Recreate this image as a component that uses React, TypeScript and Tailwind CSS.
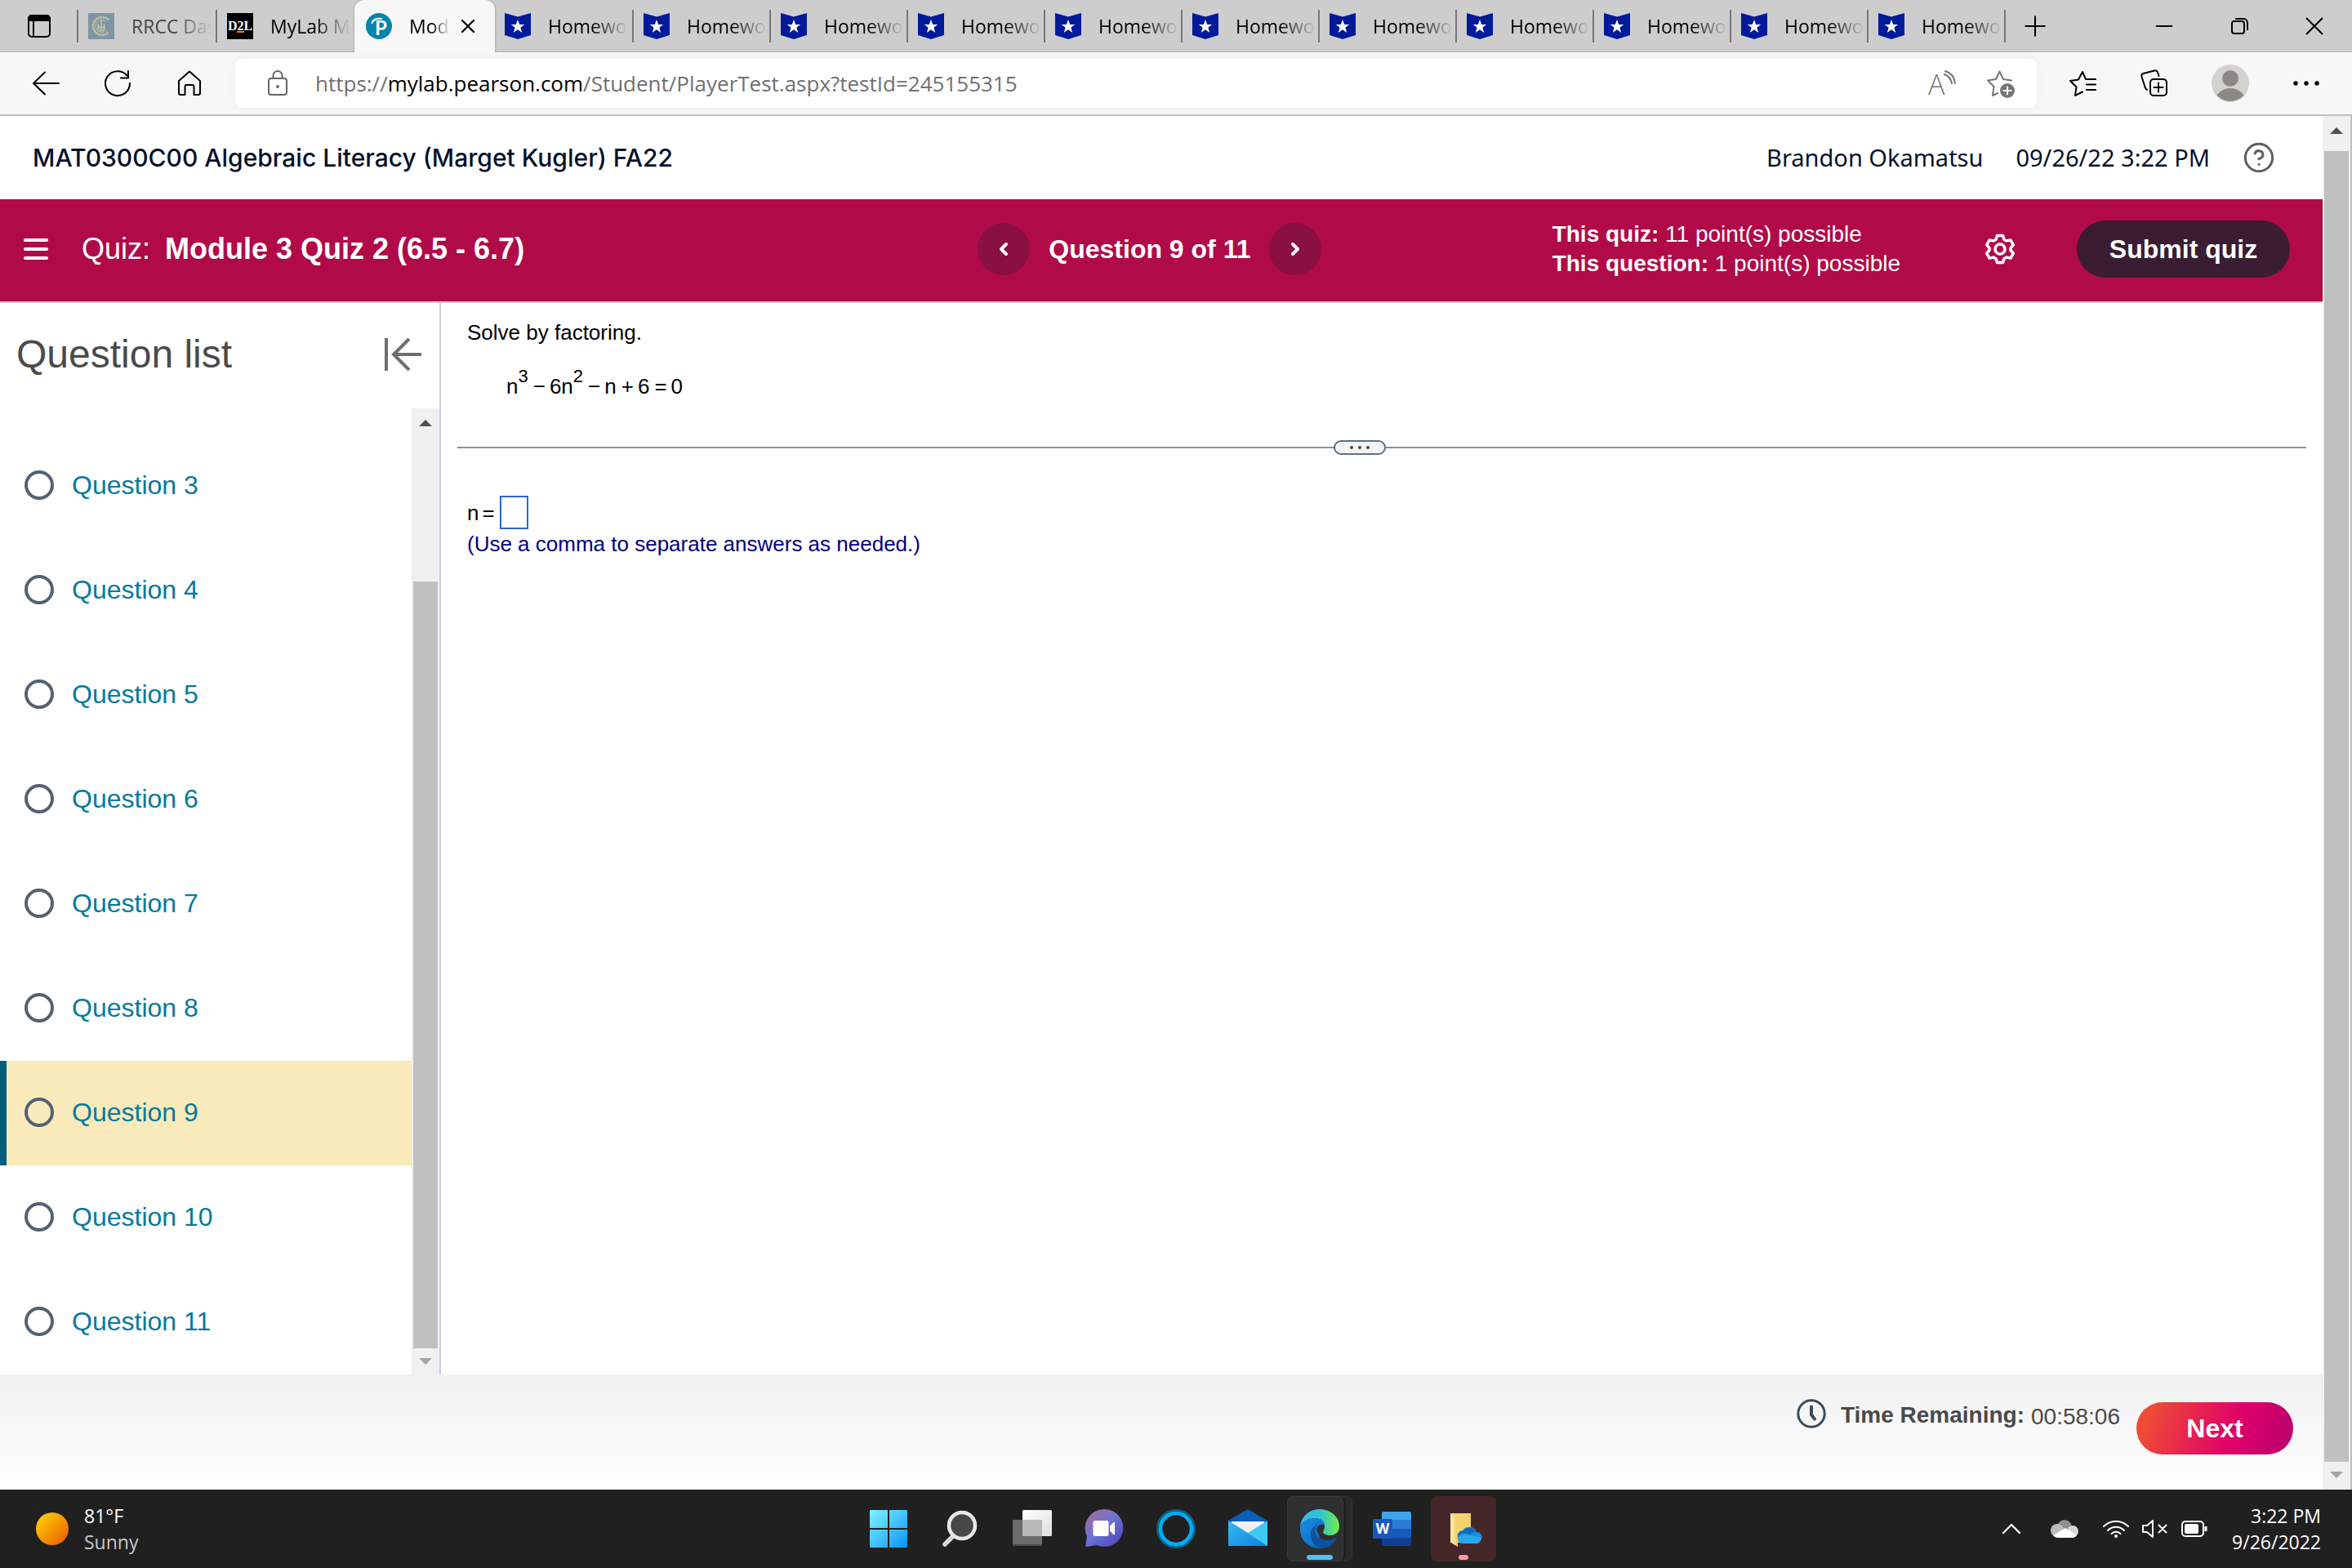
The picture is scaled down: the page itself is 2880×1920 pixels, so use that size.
import type { ReactNode } from 'react'
import { ChevronLeft, ChevronRight, ChevronUp, CircleHelp, Minus, Plus, X } from 'lucide-react'
import { clsx } from 'clsx'

type TabIcon = 'rrcc' | 'd2l' | 'pearson' | 'badge'

interface Tab {
  icon: TabIcon
  title: string
  faded?: boolean
}

const leadingTabs: Tab[] = [
  { icon: 'rrcc', title: 'RRCC Dashboard', faded: true },
  { icon: 'd2l', title: 'MyLab Math' },
]

const homeworkTabs: Tab[] = Array.from({ length: 11 }, () => ({ icon: 'badge', title: 'Homework' }))

const questions = [3, 4, 5, 6, 7, 8, 9, 10, 11]
const currentQuestion = 9

const fade = '[mask-image:linear-gradient(to_right,black_55%,transparent)]'

/* ---------- favicons ---------- */

function Favicon({ icon }: { icon: TabIcon }) {
  if (icon === 'rrcc') {
    return (
      <svg viewBox="0 0 32 32" className="size-8 shrink-0">
        <rect width="32" height="32" fill="#7b95a6" />
        <path d="M25 8.5A11 11 0 1 0 25 23.500" fill="none" stroke="#bfbf9d" strokeWidth="3" strokeDasharray="2.400 0.500" />
        <path d="M22 11A7.500 7.500 0 1 0 22 21" fill="none" stroke="#c6c6a4" strokeWidth="1" />
        <path d="M16 8v14M12.500 13v8M19.500 13v8M11 17.500h10M13 21.500h6" fill="none" stroke="#c6c6a4" strokeWidth="1.500" />
      </svg>
    )
  }
  if (icon === 'd2l') {
    return (
      <span className="relative flex size-8 shrink-0 items-center justify-center overflow-hidden bg-black font-['Liberation_Serif',serif] text-[16px] leading-none font-bold text-white">
        D2L
        <span className="absolute top-[22px] left-3 h-[2px] w-[9px] bg-[#f0792b]" />
      </span>
    )
  }
  if (icon === 'pearson') {
    return (
      <svg viewBox="0 0 32 32" className="size-8 shrink-0">
        <circle cx="16" cy="16" r="16" fill="#0484ab" />
        <path d="M7.500 12C9 8 14 6 19 7" fill="none" stroke="white" strokeWidth="2.200" strokeLinecap="round" />
        <text x="11" y="27" fill="white" fontSize="24" fontWeight="700" fontFamily="Lato, sans-serif">P</text>
      </svg>
    )
  }
  return (
    <svg viewBox="0 0 32 32" className="size-8 shrink-0">
      <path d="M0 0l16 4.500L32 0v27L16 32 0 27z" fill="#001a9a" />
      <path d="M16 8l2.200 6h6l-4.800 3.700 1.800 6.300-5.200-3.700-5.200 3.700 1.800-6.300L7.800 14h6z" fill="white" />
    </svg>
  )
}

function BrowserTab({ tab, className = 'w-[168px]' }: { tab: Tab; className?: string }) {
  return (
    <button className={clsx('flex h-10 items-center gap-[21px] overflow-hidden border-[#777] pl-3 text-left', className)}>
      <Favicon icon={tab.icon} />
      <span className={clsx('w-[98px] overflow-hidden whitespace-nowrap', fade, tab.faded ? 'text-[#444]' : 'text-black')}>
        {tab.title}
      </span>
    </button>
  )
}

function TabStrip() {
  return (
    <div className="flex h-16 items-center border-b border-[#b8b8b8] bg-[#cdcdcd] text-[23px] leading-8">
      <button aria-label="Tab actions" className="flex h-10 w-24 items-center border-r-2 border-[#777] pl-[34px]">
        <svg viewBox="0 0 28 28" className="size-7" fill="none" stroke="black" strokeWidth="2">
          <rect x="1" y="1" width="26" height="26" rx="4" />
          <path d="M1 7V5a4 4 0 0 1 4-4h18a4 4 0 0 1 4 4v2z" fill="black" />
          <path d="M7 8v19" />
        </svg>
      </button>
      <BrowserTab tab={leadingTabs[0]} className="w-[170px] border-r-2" />
      <BrowserTab tab={leadingTabs[1]} className="w-[168px]" />
      <div className="flex h-16 w-[172px] items-center rounded-t-xl bg-[#f7f7f7] pl-[14px] shadow-[0_0_3px_rgba(0,0,0,0.3)]">
        <Favicon icon="pearson" />
        <span className={clsx('ml-[21px] w-[50px] overflow-hidden whitespace-nowrap', fade)}>Module 3</span>
        <button aria-label="Close tab" className="ml-2">
          <X className="size-7" strokeWidth={2} />
        </button>
      </div>
      {homeworkTabs.map((tab, i) => (
        <BrowserTab key={i} tab={tab} className={i === 0 ? 'w-[170px] border-r-2' : 'w-[168px] border-r-2'} />
      ))}
      <button aria-label="New tab" className="ml-4">
        <Plus className="size-10" strokeWidth={1.2} />
      </button>
      <div className="ml-auto flex items-center gap-[60px] pr-[30px]">
        <button aria-label="Minimize">
          <Minus className="size-8" strokeWidth={1.5} />
        </button>
        <button aria-label="Restore">
          <svg viewBox="0 0 32 32" className="size-8" fill="none" stroke="black" strokeWidth="2">
            <rect x="7" y="10" width="15" height="15" rx="3" />
            <path d="M11 7h10a5 5 0 0 1 5 5v9" />
          </svg>
        </button>
        <button aria-label="Close">
          <svg viewBox="0 0 32 32" className="size-8" fill="none" stroke="black" strokeWidth="2">
            <path d="M6 6l20 20M26 6L6 26" />
          </svg>
        </button>
      </div>
    </div>
  )
}

function LineIcon({ label, color = 'black', children }: { label: string; color?: string; children: ReactNode }) {
  return (
    <button aria-label={label} className="shrink-0">
      <svg viewBox="0 0 36 36" className="size-9" fill="none" stroke={color} strokeWidth="2" strokeLinecap="round" strokeLinejoin="round">
        {children}
      </svg>
    </button>
  )
}

function Toolbar() {
  return (
    <div className="flex h-[78px] items-center border-b-2 border-[#bfbfbf] bg-[#f7f7f7] pr-[38px] pl-[38px]">
      <div className="flex w-[250px] items-center gap-[52px]">
        <LineIcon label="Back">
          <path d="M17 4.500L3 18l14 13.500M3 18h31" />
        </LineIcon>
        <LineIcon label="Refresh">
          <path d="M33 18A15 15 0 1 1 29.500 8.500M31 3v8.500h-9" />
        </LineIcon>
        <LineIcon label="Home">
          <path d="M5 15L18 3.500 31 15v15a2 2 0 0 1-2 2h-5.500V22a2 2 0 0 0-2-2h-7a2 2 0 0 0-2 2v10H7a2 2 0 0 1-2-2z" />
        </LineIcon>
      </div>
      <div className="flex h-[60px] min-w-0 flex-1 items-center rounded-lg bg-white pr-[26px] pl-[34px] shadow-[0_0_8px_rgba(0,0,0,0.06)]">
        <LineIcon label="Site information" color="#666">
          <rect x="7" y="12" width="22" height="20" rx="3" />
          <path d="M12.500 12V8.500a5.500 5.500 0 0 1 11 0V12" />
          <circle cx="18" cy="22" r="1" fill="#666" />
        </LineIcon>
        <span className="ml-7 flex-1 truncate text-[26px] leading-9 text-[#707070]">
          https://<span className="text-black">mylab.pearson.com</span>/Student/PlayerTest.aspx?testId=245155315
        </span>
        <LineIcon label="Read aloud" color="#767676">
          <text x="1" y="32" fontSize="34" fill="#767676" stroke="none" fontFamily="Open Sans, sans-serif" fontWeight="300">A</text>
          <path d="M21 7c5 2 8 6 9 11M22 3c7 2 11 7 12 15" />
        </LineIcon>
        <span className="w-9" />
        <LineIcon label="Add to favorites" color="#767676">
          <path d="M31 14.500l-10-1.500-4.500-9.500L12 13 2 14.500l7.500 7.500L8 33l6-3" />
          <circle cx="26" cy="27" r="9" fill="#767676" stroke="none" />
          <path d="M26 22.500v9M21.500 27h9" stroke="white" />
        </LineIcon>
      </div>
      <div className="flex items-center gap-[52px] pl-[38px]">
        <LineIcon label="Favorites">
          <path d="M34 13H22L18 4l-5 9.500L3 15l7.500 7.500L9 33l9-4.500M23 19.500h11M23 26h11" />
        </LineIcon>
        <LineIcon label="Collections">
          <path d="M9 26l-2-2L2.500 10a3 3 0 0 1 2-4L18 2.500a3 3 0 0 1 4 2L23.500 9" />
          <rect x="13" y="13" width="20" height="20" rx="4" />
          <path d="M23 17.500v11M17.500 23h11" />
        </LineIcon>
        <button aria-label="Profile">
          <svg viewBox="0 0 46 46" className="size-[46px]">
            <clipPath id="avatar"><circle cx="23" cy="23" r="22" /></clipPath>
            <circle cx="23" cy="23" r="23" fill="#d3d2cf" />
            <g clipPath="url(#avatar)" fill="#8c8985">
              <circle cx="23" cy="17" r="10" />
              <ellipse cx="23" cy="44" rx="18" ry="15" />
            </g>
          </svg>
        </button>
        <LineIcon label="Settings and more">
          <g fill="black" stroke="none">
            <circle cx="5" cy="18" r="2.700" />
            <circle cx="18" cy="18" r="2.700" />
            <circle cx="31" cy="18" r="2.700" />
          </g>
        </LineIcon>
      </div>
    </div>
  )
}

/* ---------- MyLab page ---------- */

function CourseHeader() {
  return (
    <header className="flex h-[102px] items-center pr-[58px] pl-10 text-[#05112a]">
      <h1 className="flex-1 font-['Inter',sans-serif] text-[30px] leading-10 font-medium">
        MAT0300C00 Algebraic Literacy (Marget Kugler) FA22
      </h1>
      <span className="font-['Noto_Sans',sans-serif] text-[29px] leading-10">Brandon Okamatsu</span>
      <span className="ml-10 font-['Noto_Sans',sans-serif] text-[29px] leading-10">09/26/22 3:22 PM</span>
      <button aria-label="Help" className="ml-10 text-[#5b6060]">
        <CircleHelp className="size-10" strokeWidth={1.8} />
      </button>
    </header>
  )
}

function QuizBar() {
  return (
    <div className="flex h-[127px] items-center border-b-2 border-[#c7cbd8] bg-[#b00b48] pr-10 pb-1 text-white">
      <div className="flex w-[42.7%] shrink-0 items-center pl-[29px]">
        <button aria-label="Menu" className="flex w-[30px] flex-col gap-[7px]">
          <span className="h-1 rounded-full bg-white" />
          <span className="h-1 rounded-full bg-white" />
          <span className="h-1 rounded-full bg-white" />
        </button>
        <span className="ml-[41px] text-[36px] leading-10">Quiz:</span>
        <h2 className="ml-[18px] text-[36px] leading-10 font-bold">Module 3 Quiz 2 (6.5 - 6.7)</h2>
      </div>
      <nav className="flex items-center">
        <button aria-label="Previous question" className="flex size-16 items-center justify-center rounded-full bg-[#8a0f42]">
          <ChevronLeft className="size-6" strokeWidth={4} />
        </button>
        <span className="mx-[23px] text-[32px] leading-10 font-bold">Question 9 of 11</span>
        <button aria-label="Next question" className="flex size-16 items-center justify-center rounded-full bg-[#8a0f42]">
          <ChevronRight className="size-6" strokeWidth={4} />
        </button>
      </nav>
      <div className="ml-auto flex items-center">
        <div className="text-[28px] leading-9">
          <p><b>This quiz:</b> 11 point(s) possible</p>
          <p><b>This question:</b> 1 point(s) possible</p>
        </div>
        <button aria-label="Settings" className="ml-[102px]">
          <svg viewBox="0 0 40 40" className="size-10" fill="none" stroke="white" strokeWidth="3.500" strokeLinejoin="round">
            <path d="M16.500 3.500h7l1.500 4.700 3 1.700 4.900-1 3.400 6-3.300 3.700v2.900l3.300 3.600-3.400 6-4.900-1-3 1.700-1.500 4.700h-7L15 31.800l-3-1.700-4.900 1-3.400-6L7 21.500v-2.900l-3.300-3.700 3.400-6 4.900 1 3-1.700z" />
            <circle cx="20" cy="20" r="6" />
          </svg>
        </button>
        <button className="ml-[74px] h-[70px] w-[261px] rounded-full bg-[#3a1d33] text-[32px] leading-10 font-bold">Submit quiz</button>
      </div>
    </div>
  )
}

function Scrollbar({ children, className }: { children: ReactNode; className?: string }) {
  return (
    <div aria-hidden="true" className={clsx('flex w-[34px] shrink-0 flex-col items-center bg-[#f0f0f0]', className)}>
      {children}
    </div>
  )
}

function ArrowUp() {
  return <svg viewBox="0 0 16 8" className="h-2 w-4 shrink-0"><path d="M0 8l8-8 8 8z" fill="#505050" /></svg>
}

function ArrowDown() {
  return <svg viewBox="0 0 16 8" className="h-2 w-4 shrink-0"><path d="M0 0l8 8 8-8z" fill="#a3a3a3" /></svg>
}

function QuestionList() {
  return (
    <aside className="flex w-[540px] shrink-0 flex-col border-r-2 border-[#cdd0df]">
      <div className="flex h-[129px] items-center justify-between pr-[20px] pb-1 pl-5">
        <h2 className="text-[48px] leading-[56px] text-[#4a4a4a]">Question list</h2>
        <button aria-label="Collapse question list">
          <svg viewBox="0 0 48 42" className="h-[42px] w-12" fill="none" stroke="#6a7070" strokeWidth="4">
            <path d="M3 1v40M46 21H12M31 2L12 21l19 19" />
          </svg>
        </button>
      </div>
      <div className="flex flex-1">
        <ul className="flex-1 pt-[31px]">
          {questions.map(n => (
            <li key={n}>
              <a
                href={`#question-${n}`}
                className={clsx(
                  'flex h-32 items-center gap-[22px] border-l-8 pb-[2px] pl-[22px] text-[32px] leading-10 text-[#047a9c]',
                  n === currentQuestion ? 'border-[#005d7c] bg-[#f9eabb]' : 'border-transparent'
                )}
              >
                <span className="size-9 rounded-full border-4 border-[#536270]" />
                Question {n}
              </a>
            </li>
          ))}
        </ul>
        <Scrollbar className="pt-[14px] pb-3">
          <ArrowUp />
          <div className="mt-[190px] mb-3 w-[30px] flex-1 bg-[#c0c0c0]" />
          <ArrowDown />
        </Scrollbar>
      </div>
    </aside>
  )
}

function Operator({ children }: { children: ReactNode }) {
  return <span className="mr-[5px] ml-[6px]">{children}</span>
}

function QuestionPanel() {
  return (
    <main className="min-w-0 flex-1 pt-[18px] pr-5 pl-5 text-[26px] leading-9 text-black">
      <p className="pl-3">Solve by factoring.</p>
      <p className="mt-[30px] pl-[60px]">
        n<sup className="-top-[14px] text-[22px]">3</sup>
        <Operator>−</Operator>6n<sup className="-top-[14px] text-[22px]">2</sup>
        <Operator>−</Operator>n<Operator>+</Operator>6<Operator>=</Operator>0
      </p>
      <div className="relative mt-14 h-[2px] bg-[#8a90a8]">
        <button
          aria-label="Resize panels"
          className="absolute -top-2 left-[47.4%] flex h-[18px] w-16 items-center justify-center gap-[6px] rounded-full border-2 border-[#5f7180] bg-[#f3f4f6]"
        >
          <span className="size-1 rounded-full bg-[#444]" />
          <span className="size-1 rounded-full bg-[#444]" />
          <span className="size-1 rounded-full bg-[#444]" />
        </button>
      </div>
      <div className="mt-[58px] flex h-[41px] items-center gap-[6px] pl-3">
        <label htmlFor="answer" className="flex gap-1">
          <span>n</span>
          <span>=</span>
        </label>
        <input id="answer" className="h-[41px] w-[35px] border-2 border-[#2f66d0] outline-none" />
      </div>
      <p className="pl-3 text-[#00007f]">(Use a comma to separate answers as needed.)</p>
    </main>
  )
}

function QuizFooter() {
  return (
    <footer className="flex h-[141px] items-start justify-end bg-linear-to-b from-[#f1f1f1] to-white pt-[34px] pr-9 text-[28px] leading-9 text-[#4a4a4a]">
      <svg viewBox="0 0 36 36" className="mt-[-4px] size-9" fill="none" stroke="#3a4b5c" strokeLinecap="round" strokeLinejoin="round">
        <circle cx="18" cy="18" r="16.200" strokeWidth="3" />
        <path d="M18 9.500v10l4 5" strokeWidth="4" />
      </svg>
      <b className="mt-[-2px] ml-[18px]">Time Remaining:</b>
      <span className="ml-2">00:58:06</span>
      <button className="ml-5 h-16 w-48 rounded-full bg-[linear-gradient(110deg,#ee4a35_10%,#e0006a_62%,#b5006e)] text-[32px] font-bold text-white">
        Next
      </button>
    </footer>
  )
}

/* ---------- taskbar ---------- */

function AppTile({ label, className, children }: { label: string; className?: string; children: ReactNode }) {
  return (
    <button aria-label={label} className={clsx('relative flex size-20 items-center justify-center rounded-lg', className)}>
      <svg viewBox="0 0 48 48" className="size-12">{children}</svg>
    </button>
  )
}

function Gradient({ id, stops, diagonal }: { id: string; stops: string[]; diagonal?: boolean }) {
  return (
    <linearGradient id={id} x1="0" y1="0" x2="1" y2={diagonal ? '1' : '0'}>
      {stops.map((color, i) => (
        <stop key={color} offset={i / (stops.length - 1)} stopColor={color} />
      ))}
    </linearGradient>
  )
}

function TaskbarApps() {
  return (
    <div className="flex items-center gap-2">
      <AppTile label="Start">
        <defs>
          <linearGradient id="start" gradientUnits="userSpaceOnUse" x1="1" y1="1" x2="47" y2="47">
            <stop offset="0" stopColor="#7df6ff" />
            <stop offset="1" stopColor="#0a93ff" />
          </linearGradient>
        </defs>
        <path d="M2 1h21v22H1V2zM25 1h21l1 1v21H25zM1 25h22v22H2l-1-1zM25 25h22v21l-1 1H25z" fill="url(#start)" />
      </AppTile>
      <AppTile label="Search">
        <path d="M17 31L5 43" stroke="#d4d8dc" strokeWidth="5.500" strokeLinecap="round" />
        <circle cx="26" cy="20" r="16" fill="#484848" stroke="#e6e8ea" strokeWidth="4.500" />
      </AppTile>
      <AppTile label="Task view">
        <Gradient id="view" stops={['#ffffff', '#dedede']} diagonal />
        <rect x="12" y="1" width="36" height="32" rx="1.500" fill="url(#view)" />
        <rect x="0" y="13" width="36" height="32" rx="1.500" fill="#6c6c6c" />
        <path d="M12 13h24v20H12z" fill="#b9b9b9" />
        <path d="M0 43h36v.5a1.500 1.500 0 0 1-1.500 1.500h-33A1.500 1.500 0 0 1 0 43.500z" fill="#4a4a4a" />
      </AppTile>
      <AppTile label="Chat">
        <linearGradient id="chat" x1="0.100" y1="0.200" x2="0.700" y2="0.900">
          <stop offset="0" stopColor="#9b6ca8" />
          <stop offset="0.500" stopColor="#6b74d4" />
          <stop offset="1" stopColor="#5552c4" />
        </linearGradient>
        <path d="M24 0a23 23 0 1 1-9 44L3 46c-2 0-2-1-1.500-2.500L3 33A23 23 0 0 1 24 0z" fill="url(#chat)" />
        <rect x="10.500" y="14" width="19" height="19" rx="2.500" fill="white" />
        <path d="M31 20.500l4.500-4.500q1.500-1 1.500 1v13q0 2-1.500 1L31 26.500z" fill="white" />
      </AppTile>
      <AppTile label="Cortana">
        <circle cx="24" cy="24" r="22" fill="none" stroke="#12617f" strokeWidth="4" />
        <circle cx="24" cy="24" r="19" fill="none" stroke="#00adf8" strokeWidth="4.500" />
      </AppTile>
      <AppTile label="Mail">
        <Gradient id="mailBody" stops={['#35bdf3', '#0f7fd8']} diagonal />
        <path d="M0 14L22 1q2-1 4 0l22 13v10H0z" fill="#0a5fb4" />
        <path d="M4 15h40v16H4z" fill="#f1f1f1" />
        <path d="M0 14l24 15 24-15v31H0z" fill="#3ec9f5" />
        <path d="M0 14l48 31H0z" fill="url(#mailBody)" />
      </AppTile>
      <button aria-label="Microsoft Edge" className="relative flex size-20 items-center justify-center">
        {/* stacked windows behind the icon */}
        <span className="absolute inset-y-0 right-0 w-6 rounded-r-lg border border-l-0 border-[#363636] bg-[#2b2b2b]" />
        <span className="absolute inset-y-0 left-0 w-[72px] rounded-lg border-r-3 border-[#202020] bg-[#2f2f2f] shadow-[inset_0_0_0_1px_#3a3a3a]" />
        <svg viewBox="0 0 48 48" className="relative size-12">
          <Gradient id="edgeTop" stops={['#3ab5ee', '#2cc3d2', '#74ee45']} />
          <Gradient id="edgeLeft" stops={['#1a8fe0', '#0568c2']} diagonal />
          <path d="M0 22C1 9 11 0 24 0c14 0 24 10 24 21 0 7-5 11-11 11-5 0-9-2-9-4 0-1.500 2-3 2-7 0-6-5-10-12-10C9 11 2 15 0 22z" fill="url(#edgeTop)" />
          <path d="M0 24v-2c2-7 9-11 18-11 5 0 10 2 11.500 7.500C25 18 21 20 20 25l8 19-2 4C10 48 0 38 0 24z" fill="url(#edgeLeft)" />
          <path d="M24 18.500C17 19 13 24 13 31c0 9 6 17 13 17 8 0 16-5 18.500-12 0-1-1-1.300-2-.5-3 1.700-6 2.500-9 2.500-9 0-15-5-15-12 0-4 2-7 5.500-7.500z" fill="#0c539f" />
        </svg>
        <span className="absolute bottom-[2px] left-6 h-[6px] w-8 rounded-full bg-[#4cc2ff]" />
      </button>
      <AppTile label="Word">
        <path d="M12 5a2 2 0 0 1 2-2h32a2 2 0 0 1 2 2v8H12z" fill="#41a5ee" />
        <path d="M12 13h36v11H12z" fill="#2b7cd3" />
        <path d="M12 24h36v11H12z" fill="#185abd" />
        <path d="M12 35h36v8a2 2 0 0 1-2 2H14a2 2 0 0 1-2-2z" fill="#103f91" />
        <rect x="1" y="12" width="24" height="24" rx="2" fill="#1b57bb" />
        <text x="13" y="30" textAnchor="middle" fontSize="17" fontWeight="700" fill="white" fontFamily="Open Sans, sans-serif">W</text>
      </AppTile>
      <button aria-label="OneDrive folder" className="relative flex size-20 items-center justify-center rounded-lg bg-[#442628]">
        <svg viewBox="0 0 48 48" className="size-12">
          <Gradient id="folder" stops={['#ffeeb0', '#f3ca62']} />
          <path d="M8 5h25v36H8z" fill="#f6d36f" />
          <path d="M8 5l7 4q2 1 2 3v34l-8-5q-1-1-1-2z" fill="url(#folder)" />
          <path d="M17 36c-2-7 3-10 6-10 3-6 14-6 17 2 8 1 8 13 0 14H23c-4 0-6-3-6-6z" fill="#28a8ea" />
          <path d="M17 34c0-5 3-8 7-8 3-5 13-5 16 2-4 0-6 2-8 4-5-3-10-3-15 2z" fill="#0f6cbd" />
          <path d="M32 32c2-3 5-4 8-4 4 0 7 3 7 7z" fill="#1490df" />
        </svg>
        <span className="absolute bottom-[2px] left-[34px] h-[6px] w-3 rounded-full bg-[#ff99a4]" />
      </button>
    </div>
  )
}

function Taskbar() {
  return (
    <footer className="grid h-24 grid-cols-[1fr_auto_1fr] items-center bg-[#202020] text-white">
      <div className="flex items-center gap-[19px] pl-11 text-[23px] leading-8">
        <span className="size-10 rounded-full bg-linear-to-br from-[#ffd800] to-[#e65400]" />
        <div>
          <p>81°F</p>
          <p className="text-[#c8c8c8]">Sunny</p>
        </div>
      </div>
      <TaskbarApps />
      <div className="flex items-center justify-end pr-[38px]">
        <ChevronUp className="size-10" strokeWidth={1.4} />
        <svg viewBox="0 0 34 22" className="ml-7 h-[22px] w-[34px]">
          <circle cx="17" cy="9" r="9" fill="#8f8f8f" />
          <circle cx="8" cy="13" r="8" fill="#bdbdbd" />
          <circle cx="27" cy="14" r="7" fill="#d6d6d6" />
          <path d="M3 19l15-9 14 9q-2 3-5 3H8q-3 0-5-3z" fill="white" />
        </svg>
        <svg viewBox="0 0 32 24" className="ml-[30px] h-6 w-8" fill="none" stroke="white" strokeWidth="2" strokeLinecap="round">
          <path d="M1 9a21 21 0 0 1 30 0M6 14a14 14 0 0 1 20 0M10.500 18a8 8 0 0 1 11 0" />
          <circle cx="16" cy="21" r="2" fill="white" stroke="none" />
        </svg>
        <svg viewBox="0 0 32 24" className="ml-4 h-6 w-8" fill="none" stroke="white" strokeWidth="2" strokeLinejoin="round">
          <path d="M13 2v20l-7-6H1V8h5zM20 7l10 10M30 7L20 17" />
        </svg>
        <svg viewBox="0 0 32 22" className="ml-4 h-[22px] w-8" fill="none" stroke="white" strokeWidth="2">
          <rect x="1" y="2" width="26" height="18" rx="4" />
          <rect x="5" y="6" width="15" height="10" rx="1" fill="white" />
          <path d="M30 8v6" strokeWidth="3" />
        </svg>
        <div className="ml-[30px] text-right text-[23px] leading-8">
          <p>3:22 PM</p>
          <p>9/26/2022</p>
        </div>
      </div>
    </footer>
  )
}

export default function App() {
  return (
    <div className="flex min-h-screen flex-col bg-white font-['Open_Sans','Noto_Sans',sans-serif] text-black">
      <TabStrip />
      <Toolbar />
      <div className="flex flex-1">
        <div className="flex min-w-0 flex-1 flex-col font-['Liberation_Sans',Arial,sans-serif]">
          <CourseHeader />
          <QuizBar />
          <div className="flex flex-1">
            <QuestionList />
            <QuestionPanel />
          </div>
          <QuizFooter />
        </div>
        <Scrollbar className="box-content border-r-2 border-[#bfbfbf] pt-[14px] pb-[14px]">
          <ArrowUp />
          <div className="mt-[21px] mb-3 w-[30px] flex-1 bg-[#c0c0c0]" />
          <ArrowDown />
        </Scrollbar>
      </div>
      <Taskbar />
    </div>
  )
}
